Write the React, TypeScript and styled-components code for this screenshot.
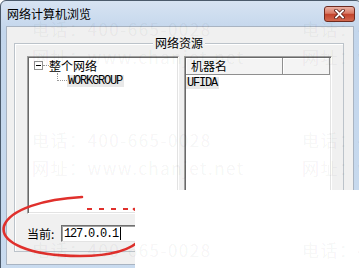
import styled, { createGlobalStyle } from "styled-components";

const GlobalStyle = createGlobalStyle`
  html, body {
    margin: 0;
    padding: 0;
    background: #ffffff;
    width: 359px;
    height: 268px;
    overflow: hidden;
  }
  * {
    box-sizing: border-box;
  }
`;

const CJK = `"Noto Sans CJK SC", "Noto Sans", sans-serif`;
const MONO = `"Liberation Mono", "DejaVu Sans Mono", monospace`;

const Page = styled.div`
  position: relative;
  width: 359px;
  height: 268px;
  overflow: hidden;
`;

const Window = styled.div`
  width: 362px;
  height: 280px;
  border: 1px solid #4b5a6b;
  border-radius: 6px 6px 0 0;
  background: linear-gradient(#d7e3f2, #c3d6ec 30px, #c9dbef);
  display: flex;
  flex-direction: column;
`;

const TitleBar = styled.div`
  height: 25px;
  display: flex;
  align-items: flex-start;
  justify-content: space-between;
  padding: 0 6px 0 6px;
`;

const Title = styled.span`
  font-family: ${CJK};
  font-size: 12px;
  line-height: 14px;
  margin-top: 6px;
  color: #000;
`;

const CloseBtn = styled.div`
  width: 31px;
  height: 16px;
  margin-top: 5px;
  border: 1px solid #6e2b20;
  border-radius: 3px;
  background: linear-gradient(#eab1a4 0%, #d97a65 45%, #c2432c 52%, #d2684f 100%);
  display: flex;
  align-items: center;
  justify-content: center;
`;

const Client = styled.div`
  width: 348px;
  height: 239px;
  margin-left: 5px;
  border: 1px solid #a9b4c2;
  background: #f0f0f0;
  padding: 16px 0 0 7px;
`;

const GroupBox = styled.div`
  position: relative;
  width: 330px;
  height: 209px;
  border: 1px solid #bcc3ca;
  box-shadow: inset 1px 1px 0 #ffffff;
  padding: 12px 11px 0 12px;
  display: flex;
  flex-direction: column;
`;

const Caption = styled.span`
  position: absolute;
  top: -8px;
  left: 50%;
  transform: translateX(-50%);
  padding: 0 2px;
  background: #f0f0f0;
  font-family: ${CJK};
  font-size: 12px;
  line-height: 14px;
  color: #000;
  white-space: nowrap;
`;

const Panes = styled.div`
  display: flex;
  gap: 5px;
  height: 158px;
`;

const Pane = styled.div<{ $width?: number }>`
  ${(p) => (p.$width ? `width: ${p.$width}px;` : "flex: 1;")}
  height: 100%;
  background: #ffffff;
  border: 1px solid;
  border-color: #a0a0a0 #ffffff #ffffff #a0a0a0;
  box-shadow: inset 1px 1px 0 #696969, inset -1px -1px 0 #e3e3e3;
  padding: 1px;
  overflow: hidden;
`;

const TreeRow = styled.div<{ $indent: number }>`
  height: 15px;
  display: flex;
  align-items: center;
  padding-left: ${(p) => p.$indent}px;
`;

const Expander = styled.div`
  width: 9px;
  height: 9px;
  border: 1px solid #919191;
  background: #fff;
  display: flex;
  align-items: center;
  justify-content: center;
  &::after {
    content: "";
    width: 5px;
    height: 1px;
    background: #000;
  }
`;

const HLine = styled.div`
  width: 6px;
  border-top: 1px dotted #9a9a9a;
`;

const Elbow = styled.div`
  align-self: flex-start;
  width: 10px;
  height: 8px;
  border-left: 1px dotted #9a9a9a;
  border-bottom: 1px dotted #9a9a9a;
`;

const NodeText = styled.span`
  font-family: ${CJK};
  font-size: 12px;
  line-height: 14px;
  color: #000;
`;

const NodeCode = styled.span<{ $selected?: boolean }>`
  font-family: ${MONO};
  font-size: 12px;
  letter-spacing: -1.2px;
  line-height: 12px;
  padding: 0 2px 0 1px;
  color: #000;
  background: ${(p) => (p.$selected ? "#e8e8e8" : "transparent")};
`;

const Header = styled.div`
  display: flex;
  height: 17px;
`;

const HeaderCell = styled.div<{ $width?: number }>`
  ${(p) => (p.$width ? `width: ${p.$width}px;` : "flex: 1;")}
  height: 17px;
  background: #f4f4f4;
  border-right: 1px solid #8f8f8f;
  border-bottom: 1px solid #8f8f8f;
  box-shadow: inset 1px 1px 0 #ffffff;
  padding-left: 5px;
  font-family: ${CJK};
  font-size: 12px;
  line-height: 16px;
  color: #000;
`;

const ListRow = styled.div`
  height: 13px;
  margin-top: 1px;
  display: flex;
  align-items: center;
`;

const InputRow = styled.div`
  display: flex;
  align-items: center;
  margin-top: 11px;
  height: 17px;
`;

const Label = styled.span`
  font-family: ${CJK};
  font-size: 12px;
  line-height: 14px;
  color: #000;
  width: 34px;
`;

const TextBox = styled.div`
  width: 200px;
  height: 17px;
  background: #fff;
  border: 1px solid;
  border-color: #707070 #e3e3e3 #e3e3e3 #707070;
  box-shadow: inset 1px 1px 0 #a0a0a0;
  display: flex;
  align-items: center;
  padding-left: 2px;
  font-family: ${MONO};
  font-size: 12px;
  letter-spacing: -1.2px;
  color: #000;
`;

const Caret = styled.span`
  width: 1px;
  height: 13px;
  background: #000;
  margin-left: 2px;
`;

const Annotation = styled.svg`
  position: absolute;
  left: 0;
  top: 0;
  pointer-events: none;
`;

const Cover = styled.div`
  position: absolute;
  left: 135px;
  top: 190px;
  width: 224px;
  height: 78px;
  background: #ffffff;
`;

const Watermark = styled.div`
  position: absolute;
  left: 32px;
  top: 15px;
  display: grid;
  grid-template-columns: repeat(2, 270px);
  grid-auto-rows: 110.5px;
  pointer-events: none;
`;

const MarkTile = styled.div`
  font-family: ${CJK};
  font-size: 17px;
  line-height: 28px;
  letter-spacing: 1.5px;
  color: rgba(0, 0, 0, 0.055);
  white-space: nowrap;
`;

export default function App() {
  const tiles = Array.from({ length: 6 });
  return (
    <>
      <GlobalStyle />
      <Page>
        <Window>
          <TitleBar>
            <Title>网络计算机浏览</Title>
            <CloseBtn>
              <svg width="11" height="10" viewBox="0 0 11 10">
                <path d="M2 1.5 L9 8.5 M9 1.5 L2 8.5" stroke="#5a1f16" strokeWidth="3.4" strokeLinecap="square" />
                <path d="M2 1.5 L9 8.5 M9 1.5 L2 8.5" stroke="#ffffff" strokeWidth="1.8" strokeLinecap="square" />
              </svg>
            </CloseBtn>
          </TitleBar>
          <Client>
            <GroupBox>
              <Caption>网络资源</Caption>
              <Panes>
                <Pane $width={152}>
                  <TreeRow $indent={5}>
                    <Expander />
                    <HLine />
                    <NodeText>整个网络</NodeText>
                  </TreeRow>
                  <TreeRow $indent={28}>
                    <Elbow />
                    <NodeCode $selected>WORKGROUP</NodeCode>
                  </TreeRow>
                </Pane>
                <Pane>
                  <Header>
                    <HeaderCell $width={97}>机器名</HeaderCell>
                    <HeaderCell />
                  </Header>
                  <ListRow>
                    <NodeCode $selected>UFIDA</NodeCode>
                  </ListRow>
                </Pane>
              </Panes>
              <InputRow>
                <Label>当前:</Label>
                <TextBox>
                  127.0.0.1
                  <Caret />
                </TextBox>
              </InputRow>
            </GroupBox>
          </Client>
        </Window>
        <Annotation width="359" height="268" viewBox="0 0 359 268">
          <path
            d="M82 197 C45 199 10 209 4 226 C0 242 28 256 80 256 C110 256 132 250 142 238 C150 226 145 214 134 209"
            fill="none"
            stroke="#e0302c"
            strokeWidth="2.6"
            strokeLinecap="round"
          />
          <path d="M87 209 H132" stroke="#e0302c" strokeWidth="2" strokeDasharray="5 7" />
        </Annotation>
        <Cover />
        <Watermark>
          {tiles.map((_, i) => (
            <MarkTile key={i}>
              电话：400-665-0028
              <br />
              网址：www.chanjet.net
            </MarkTile>
          ))}
        </Watermark>
      </Page>
    </>
  );
}
